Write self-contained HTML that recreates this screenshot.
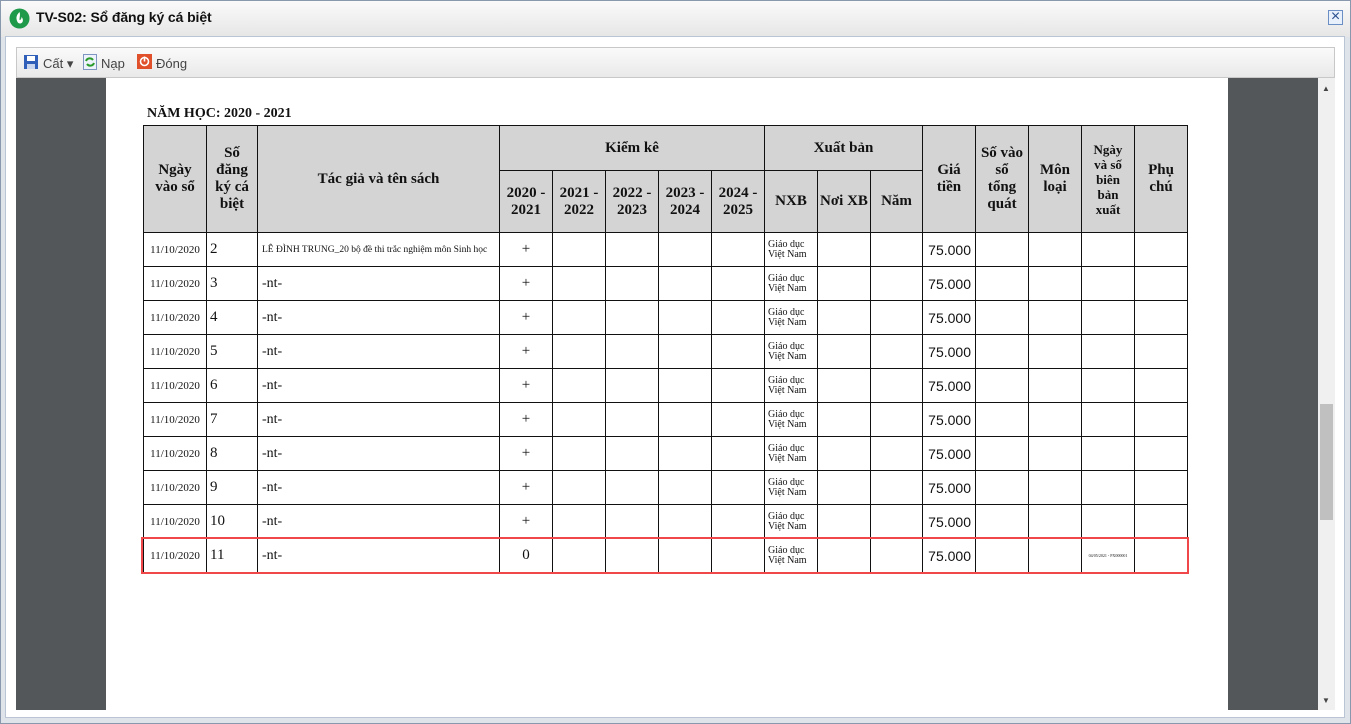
<!DOCTYPE html>
<html><head><meta charset="utf-8"><style>
*{margin:0;padding:0;box-sizing:border-box}
body{width:1351px;height:724px;overflow:hidden;background:#fff;font-family:"Liberation Sans",sans-serif;position:relative}
.win{position:absolute;left:0;top:0;width:1351px;height:724px;border:1px solid #8a98ad;background:linear-gradient(#fafafa,#e6e6e6 36px,#dfe3ea 36px);}
.title{position:absolute;left:36px;top:9px;font-size:14px;color:#111;font-weight:bold;letter-spacing:-0.1px}
.inner{position:absolute;left:5px;top:36px;width:1340px;height:682px;background:#fff;border:1px solid #b9c4d4}
.tb{position:absolute;left:16px;top:47px;width:1319px;height:31px;border:1px solid #c8c8c8;background:linear-gradient(#fafafa,#e9e9e9)}
.tb span{position:absolute;top:8px;font-size:13px;color:#444}
.content{position:absolute;left:16px;top:78px;width:1302px;height:632px;background:#53575a}
.page{position:absolute;left:106px;top:78px;width:1122px;height:632px;background:#fff}
.sb{position:absolute;left:1318px;top:78px;width:17px;height:632px;background:#f0f0f0}
.thumb{position:absolute;left:1320px;top:404px;width:13px;height:116px;background:#c0c0c0}
table{position:absolute;left:143px;top:125px;border-collapse:collapse;table-layout:fixed;font-family:"Liberation Serif",serif}
td,th{border:1.5px solid #111;}
th{background:#d4d4d4;font-weight:bold;font-size:15px;line-height:17px;text-align:center;color:#111}
td{height:34px;font-size:14px;color:#111;vertical-align:middle}
.d{font-size:11px;text-align:center}
.n{font-size:15px;padding-left:3px}
.t{font-size:14px;padding-left:4px}
.t.s{font-size:9.5px;white-space:nowrap;overflow:hidden}
.p{text-align:center;font-size:15px}
.g{font-size:10px;line-height:10px;padding-left:3px}
.m{font-family:"Liberation Sans",sans-serif;font-size:14px;text-align:right;padding-right:4px}
.red{position:absolute;left:141px;top:537px;width:1048px;height:37px;border:2.5px solid #f0474a}
</style></head><body>
<div class="win"></div>
<svg style="position:absolute;left:9px;top:8px" width="21" height="21" viewBox="0 0 21 21"><circle cx="10.5" cy="10.5" r="10" fill="#1e9a4a"/><path d="M10.5 4c-3 3-4 6-2 10 1 2 4 2 5 0 1-2 0-4-1-5 0 2-1 3-2 3 0-3 1-5 0-8z" fill="#fff"/></svg>
<div class="title">TV-S02: Sổ đăng ký cá biệt</div>
<div style="position:absolute;left:1328px;top:10px;width:15px;height:15px;border:1px solid #6b8fc5;background:#e8f0fb;color:#2a4f8f;font-size:16px;line-height:12px;text-align:center">×</div>
<div class="inner"></div>
<div class="tb">
<svg style="position:absolute;left:6px;top:6px" width="16" height="16"><rect x="1" y="1" width="14" height="14" fill="#2f5fb8"/><rect x="4" y="2" width="8" height="5" fill="#fff"/><rect x="4" y="10" width="8" height="5" fill="#c9d6ee"/></svg>
<span style="left:26px">Cất ▾</span>
<svg style="position:absolute;left:66px;top:6px" width="14" height="16"><rect x="0.5" y="0.5" width="13" height="15" fill="#eef3fb" stroke="#7d95c0"/><path d="M3 7a4 4 0 0 1 7-1M11 9a4 4 0 0 1-7 1" stroke="#2a9a2a" stroke-width="2" fill="none"/></svg>
<span style="left:84px">Nạp</span>
<svg style="position:absolute;left:120px;top:6px" width="15" height="15"><rect width="15" height="15" fill="#e0502a"/><circle cx="7.5" cy="7.5" r="4" stroke="#fff" stroke-width="1.6" fill="none"/><rect x="6.7" y="2.5" width="1.6" height="5" fill="#fff"/></svg>
<span style="left:139px">Đóng</span>
</div>
<div class="content"></div>
<div class="page"></div>
<div class="sb"></div><div class="thumb"></div>
<div style="position:absolute;left:1322px;top:84px;font-size:8px;color:#444">▲</div>
<div style="position:absolute;left:1322px;top:696px;font-size:8px;color:#444">▼</div>
<div style="position:absolute;left:147px;top:106px;font-family:'Liberation Serif',serif;font-weight:bold;font-size:14px;color:#111">NĂM HỌC: 2020 - 2021</div>
<table>
<colgroup><col style="width:63px"><col style="width:51px"><col style="width:242px"><col style="width:53px"><col style="width:53px"><col style="width:53px"><col style="width:53px"><col style="width:53px"><col style="width:53px"><col style="width:53px"><col style="width:52px"><col style="width:53px"><col style="width:53px"><col style="width:53px"><col style="width:53px"><col style="width:53px"></colgroup>
<tr style="height:45px"><th rowspan="2">Ngày<br>vào sổ</th><th rowspan="2">Số<br>đăng<br>ký cá<br>biệt</th><th rowspan="2">Tác giả và tên sách</th><th colspan="5">Kiểm kê</th><th colspan="3">Xuất bản</th><th rowspan="2">Giá<br>tiền</th><th rowspan="2">Số vào<br>sổ<br>tổng<br>quát</th><th rowspan="2">Môn<br>loại</th><th rowspan="2" style="font-size:13px;line-height:15px">Ngày<br>và số<br>biên<br>bản<br>xuất</th><th rowspan="2">Phụ<br>chú</th></tr>
<tr style="height:62px"><th>2020 -<br>2021</th><th>2021 -<br>2022</th><th>2022 -<br>2023</th><th>2023 -<br>2024</th><th>2024 -<br>2025</th><th>NXB</th><th>Nơi XB</th><th>Năm</th></tr>
<tr><td class="d">11/10/2020</td><td class="n">2</td><td class="t s">LÊ ĐÌNH TRUNG_20 bộ đề thi trắc nghiệm môn Sinh học</td><td class="p">+</td><td></td><td></td><td></td><td></td><td class="g">Giáo dục<br>Việt Nam</td><td></td><td></td><td class="m">75.000</td><td></td><td></td><td></td><td></td></tr>
<tr><td class="d">11/10/2020</td><td class="n">3</td><td class="t">-nt-</td><td class="p">+</td><td></td><td></td><td></td><td></td><td class="g">Giáo dục<br>Việt Nam</td><td></td><td></td><td class="m">75.000</td><td></td><td></td><td></td><td></td></tr>
<tr><td class="d">11/10/2020</td><td class="n">4</td><td class="t">-nt-</td><td class="p">+</td><td></td><td></td><td></td><td></td><td class="g">Giáo dục<br>Việt Nam</td><td></td><td></td><td class="m">75.000</td><td></td><td></td><td></td><td></td></tr>
<tr><td class="d">11/10/2020</td><td class="n">5</td><td class="t">-nt-</td><td class="p">+</td><td></td><td></td><td></td><td></td><td class="g">Giáo dục<br>Việt Nam</td><td></td><td></td><td class="m">75.000</td><td></td><td></td><td></td><td></td></tr>
<tr><td class="d">11/10/2020</td><td class="n">6</td><td class="t">-nt-</td><td class="p">+</td><td></td><td></td><td></td><td></td><td class="g">Giáo dục<br>Việt Nam</td><td></td><td></td><td class="m">75.000</td><td></td><td></td><td></td><td></td></tr>
<tr><td class="d">11/10/2020</td><td class="n">7</td><td class="t">-nt-</td><td class="p">+</td><td></td><td></td><td></td><td></td><td class="g">Giáo dục<br>Việt Nam</td><td></td><td></td><td class="m">75.000</td><td></td><td></td><td></td><td></td></tr>
<tr><td class="d">11/10/2020</td><td class="n">8</td><td class="t">-nt-</td><td class="p">+</td><td></td><td></td><td></td><td></td><td class="g">Giáo dục<br>Việt Nam</td><td></td><td></td><td class="m">75.000</td><td></td><td></td><td></td><td></td></tr>
<tr><td class="d">11/10/2020</td><td class="n">9</td><td class="t">-nt-</td><td class="p">+</td><td></td><td></td><td></td><td></td><td class="g">Giáo dục<br>Việt Nam</td><td></td><td></td><td class="m">75.000</td><td></td><td></td><td></td><td></td></tr>
<tr><td class="d">11/10/2020</td><td class="n">10</td><td class="t">-nt-</td><td class="p">+</td><td></td><td></td><td></td><td></td><td class="g">Giáo dục<br>Việt Nam</td><td></td><td></td><td class="m">75.000</td><td></td><td></td><td></td><td></td></tr>
<tr><td class="d">11/10/2020</td><td class="n">11</td><td class="t">-nt-</td><td class="p">0</td><td></td><td></td><td></td><td></td><td class="g">Giáo dục<br>Việt Nam</td><td></td><td></td><td class="m">75.000</td><td></td><td></td><td style="font-size:4px;text-align:center">04/05/2021 - PX000001</td><td></td></tr>
</table>
<div class="red"></div>
</body></html>
